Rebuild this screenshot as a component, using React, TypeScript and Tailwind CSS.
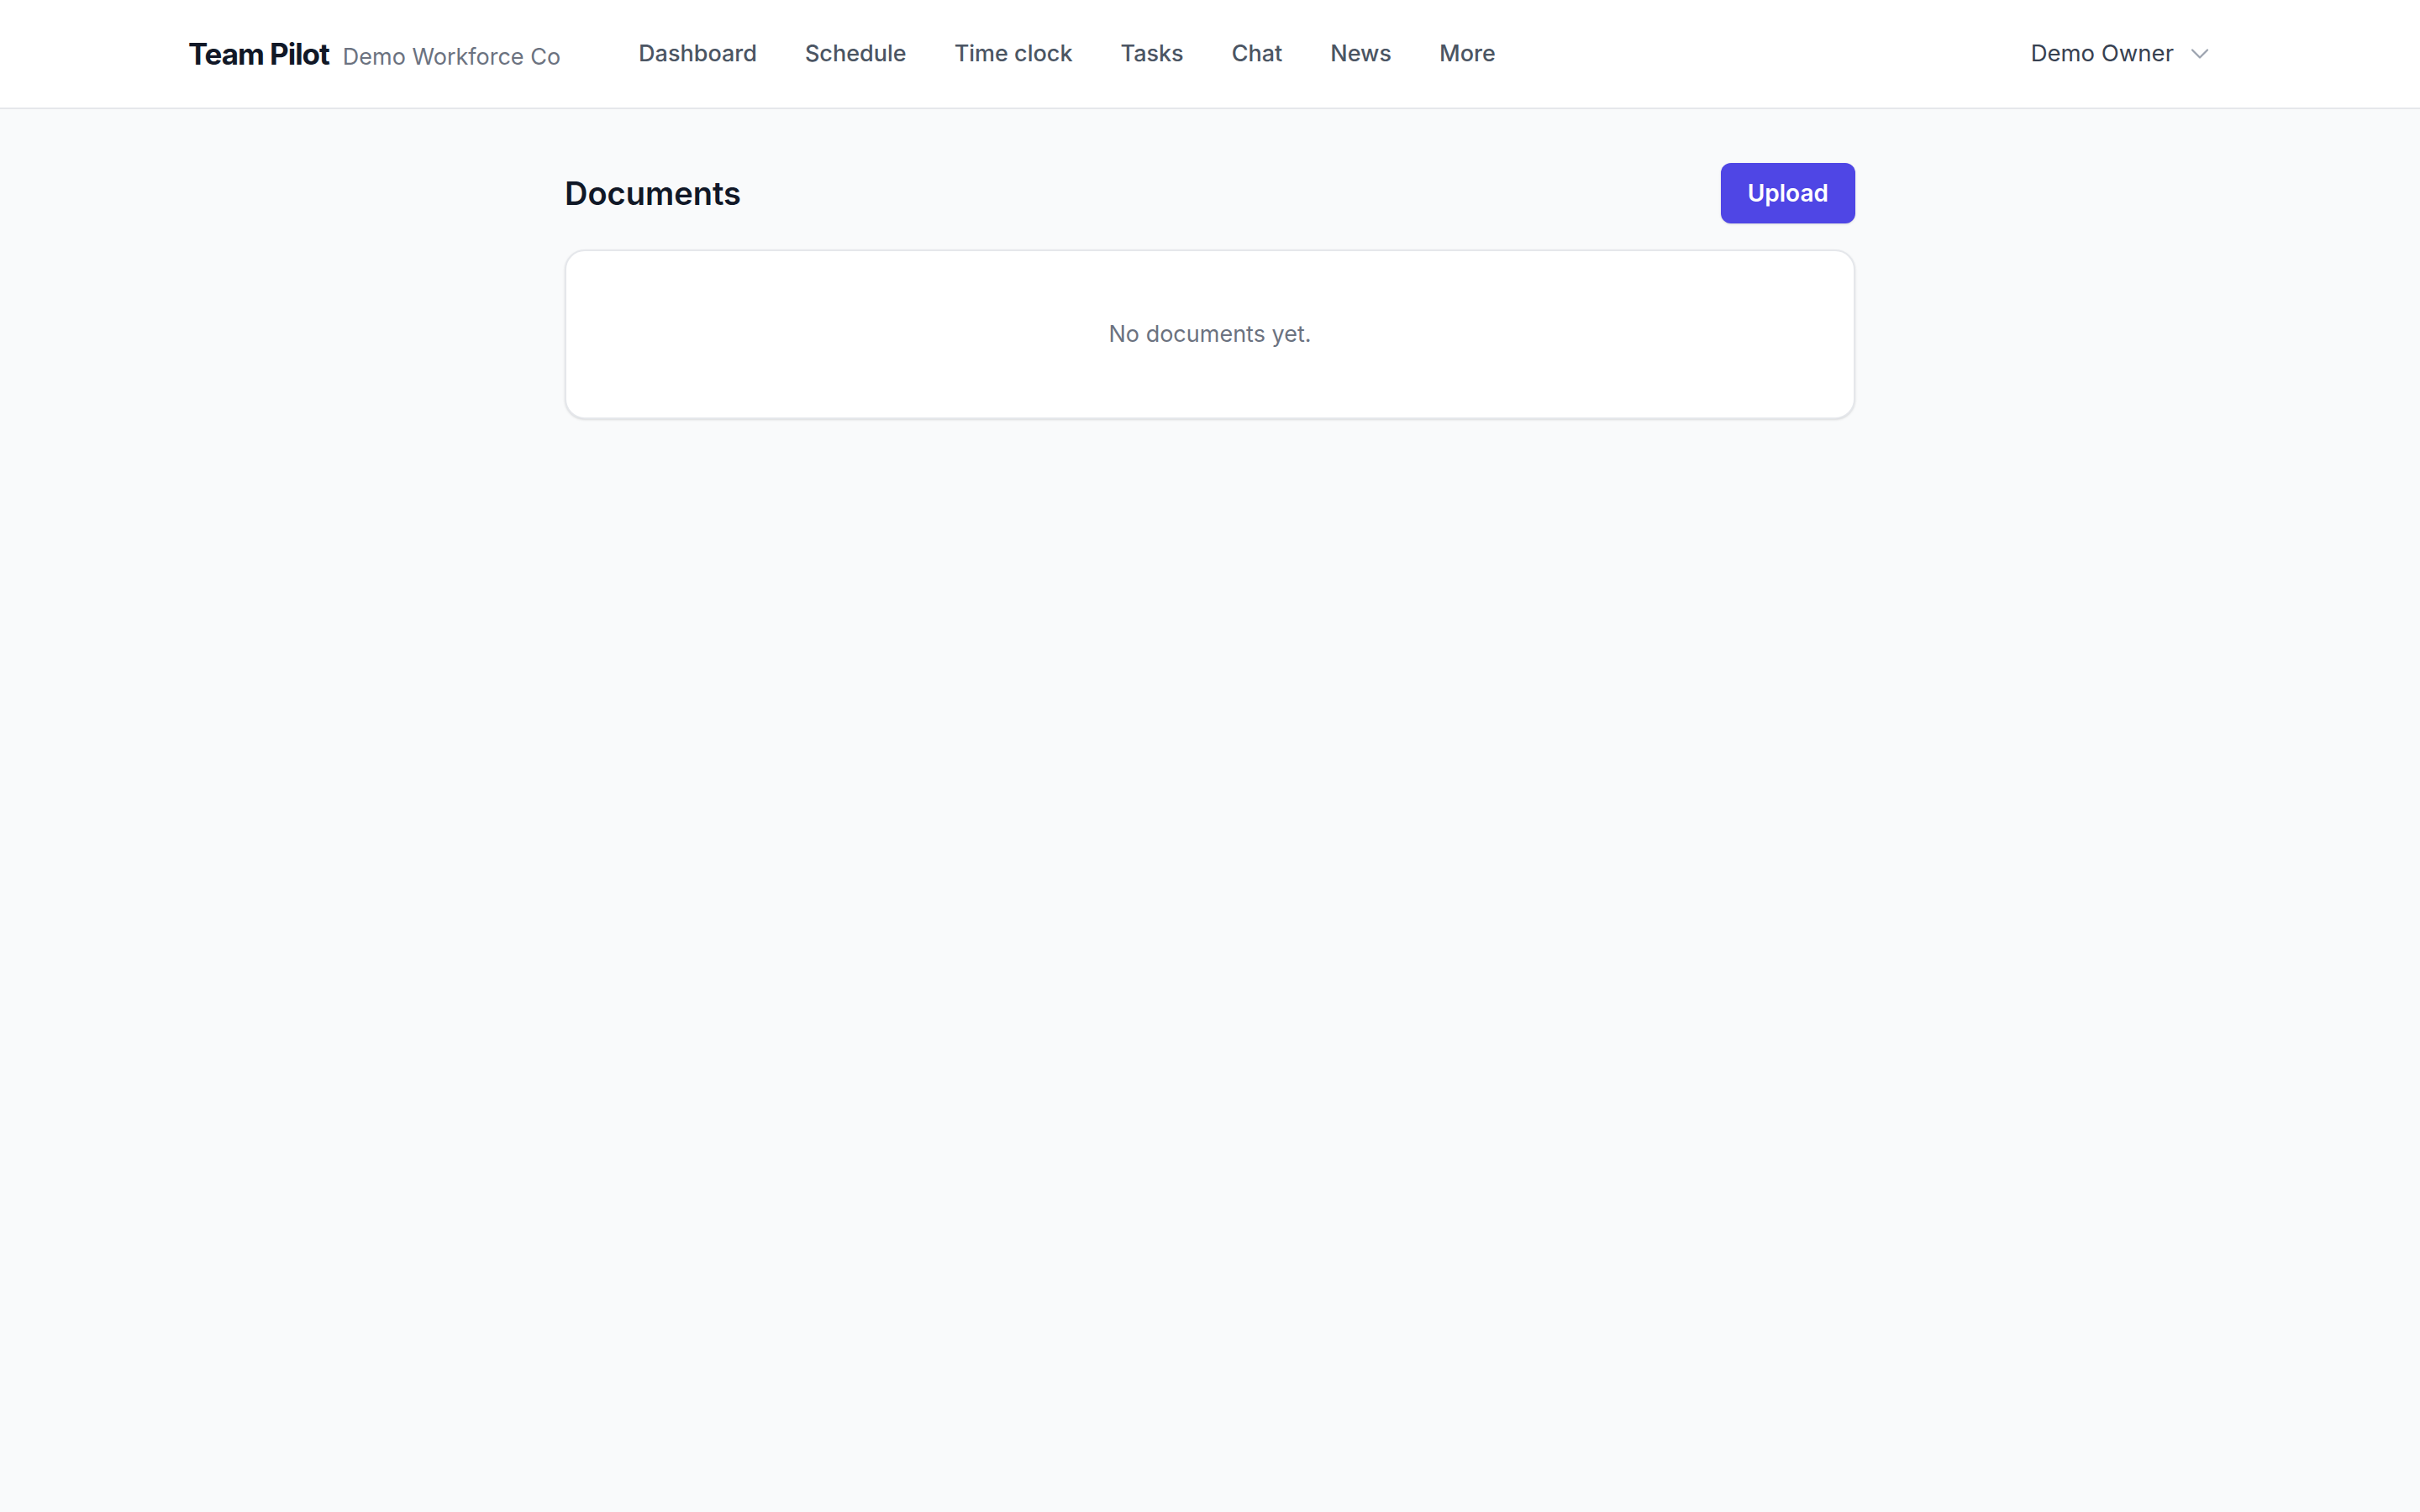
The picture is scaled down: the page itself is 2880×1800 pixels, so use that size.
import { ChevronDown } from "lucide-react";

const navItems = ["Dashboard", "Schedule", "Time clock", "Tasks", "Chat", "News", "More"];

export default function App() {
  return (
    <div className="min-h-screen bg-[#f9fafb] font-['Inter','Liberation_Sans',sans-serif] antialiased">
      <header className="border-b-2 border-[#e5e7eb] bg-white">
        <div className="mx-auto flex h-[128px] max-w-[2560px] items-center justify-between px-[64px]">
          <div className="flex items-center">
            <a href="#" className="flex items-baseline gap-[16px]">
              <span className="text-[35px] font-bold tracking-[-0.03em] text-[#111827]">Team Pilot</span>
              <span className="text-[27px] text-[#6b7280]">Demo Workforce Co</span>
            </a>
            <nav className="ml-[93px] flex items-center gap-[57px]">
              {navItems.map((item) => (
                <a key={item} href="#" className="text-[27px] font-medium text-[#4b5563]">
                  {item}
                </a>
              ))}
            </nav>
          </div>
          <button className="flex items-center gap-[13px] pr-[20px] text-[27.5px] text-[#374151]">
            Demo Owner
            <ChevronDown className="h-[36px] w-[36px] text-[#9ca3af]" strokeWidth={1.5} />
          </button>
        </div>
      </header>

      <main className="mx-auto max-w-[1536px] pt-[64px]">
        <div className="flex items-center justify-between">
          <h1 className="text-[38px] font-semibold text-[#111827]">Documents</h1>
          <button className="rounded-[12px] bg-[#4f46e5] px-[32px] py-[16px] text-[28px] leading-[40px] font-semibold text-white shadow-sm">
            Upload
          </button>
        </div>

        <div className="mt-[31px] rounded-[24px] border-2 border-[#e5e7eb] bg-white px-[78px] py-[79px] text-center shadow-sm">
          <p className="text-[27px] leading-[40px] text-[#6b7280]">No documents yet.</p>
        </div>
      </main>
    </div>
  );
}
